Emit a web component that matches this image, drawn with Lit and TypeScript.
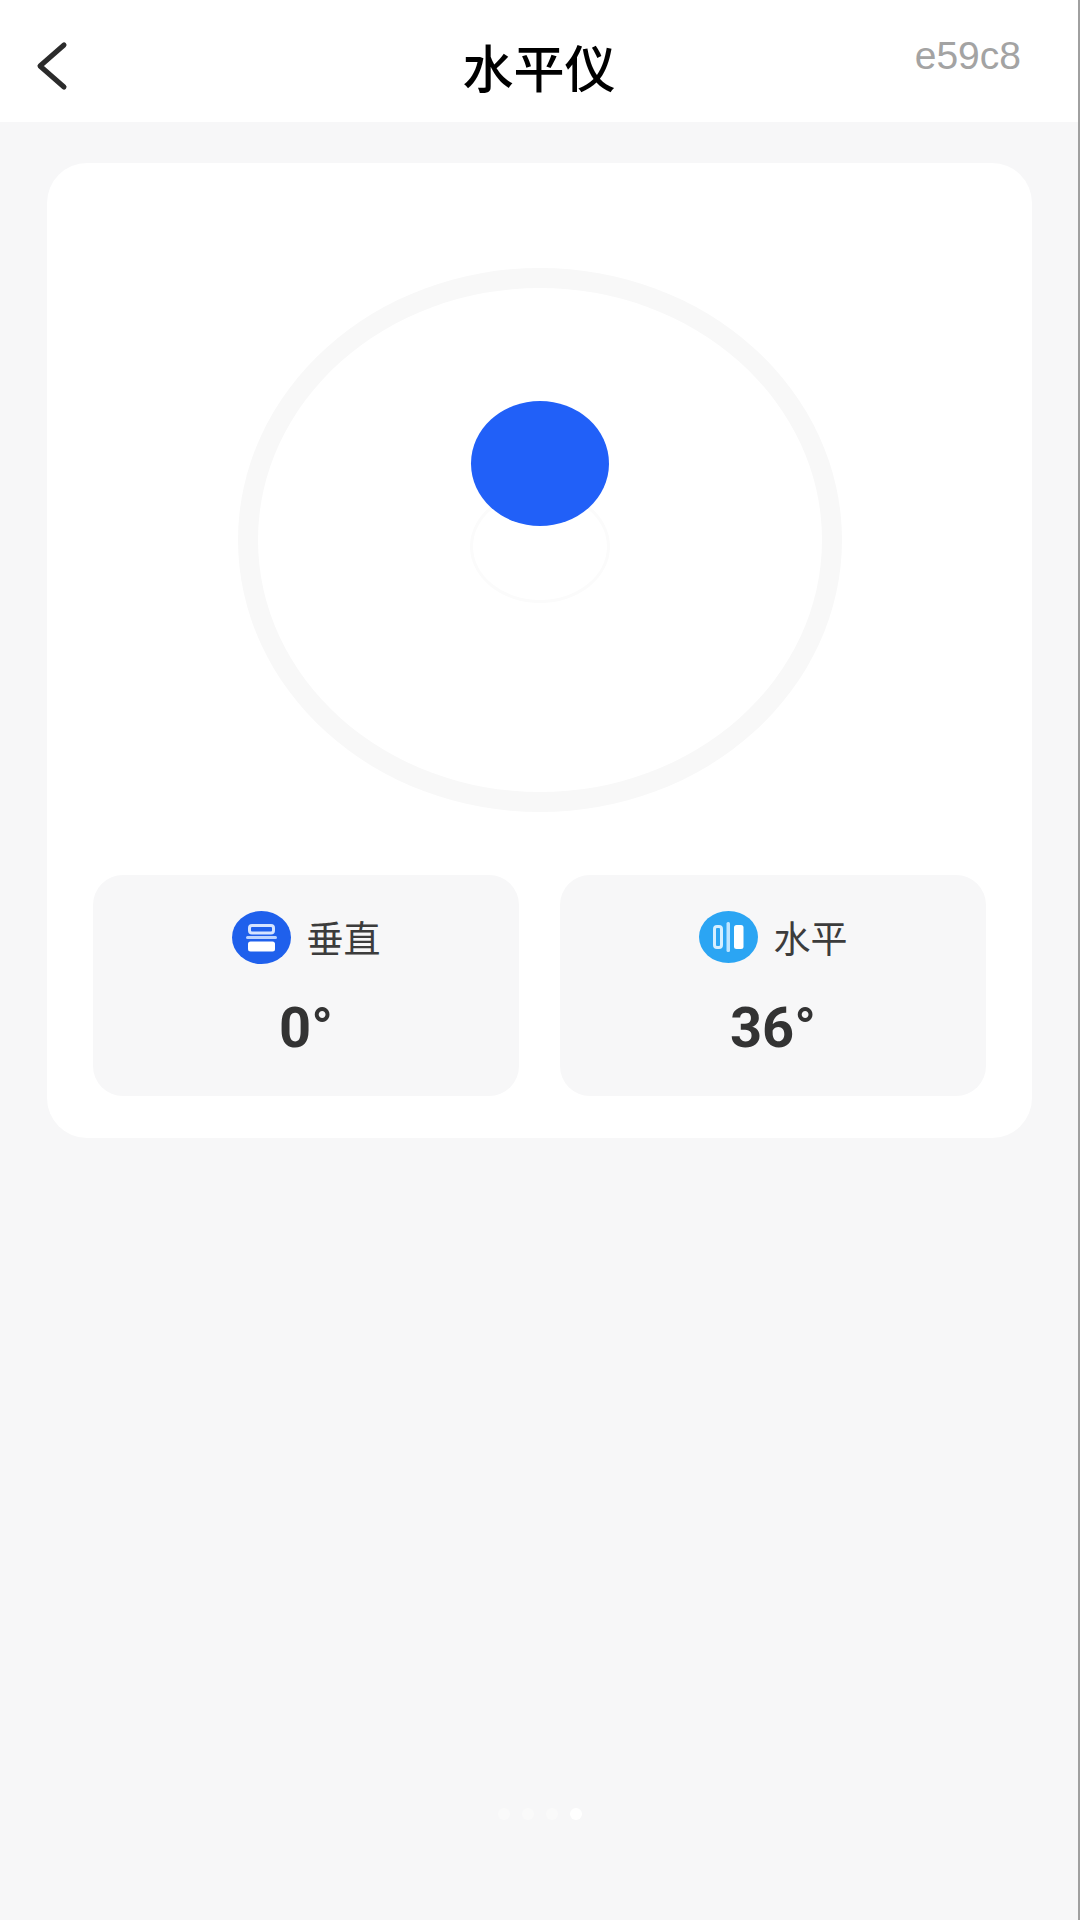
import { LitElement, html, css, svg } from 'lit';
import { customElement, state } from 'lit/decorators.js';

interface Axis {
  label: string;
  value: number;
  icon: 'vertical' | 'horizontal';
}

const verticalIcon = svg`
  <ellipse cx="29.5" cy="26.5" rx="29.5" ry="26.5" fill="#1f60ec" />
  <rect x="17.5" y="14.5" width="24" height="7.5" rx="2.5" fill="none" stroke="#d5e4ff" stroke-width="3" />
  <rect x="14" y="25" width="31" height="3" rx="1.5" fill="#bcd4ff" />
  <rect x="16" y="30.5" width="27" height="10" rx="2.5" fill="#fff" />
`;

const horizontalIcon = svg`
  <ellipse cx="29.5" cy="26" rx="29.5" ry="26" fill="#2ba5f3" />
  <rect x="15.5" y="15.5" width="7" height="21" rx="2.5" fill="none" stroke="#d6efff" stroke-width="3" />
  <rect x="27.5" y="11" width="3.5" height="30" rx="1.5" fill="#bfe5ff" />
  <rect x="35" y="14" width="9.5" height="24" rx="2.5" fill="#fff" />
`;

@customElement('app-root')
export class AppRoot extends LitElement {
  @state() private axes: Axis[] = [
    { label: '垂直', value: 0, icon: 'vertical' },
    { label: '水平', value: 36, icon: 'horizontal' },
  ];

  static styles = css`
    :host {
      display: flex;
      flex-direction: column;
      height: 1920px;
      box-sizing: border-box;
      background: #f7f7f8;
      border-right: 2px solid #a0a0a0;
      font-family: 'Liberation Sans', 'Noto Sans CJK SC', sans-serif;
    }
    .header {
      display: grid;
      grid-template-columns: 1fr auto 1fr;
      align-items: center;
      height: 122px;
      background: #fff;
    }
    .back {
      display: block;
      margin: 8px 0 0 34px;
    }
    .title {
      font-family: 'Noto Sans CJK SC', sans-serif;
      font-size: 51px;
      font-weight: 500;
      line-height: 60px;
      color: #000;
      padding-top: 10px;
    }
    .device {
      justify-self: end;
      margin-right: 57px;
      margin-bottom: 10px;
      font-size: 39px;
      color: #a3a3a3;
    }
    .card {
      margin: 41px 46px 0 47px;
      padding: 105px 46px 42px;
      background: #fff;
      border-radius: 40px;
    }
    .ring {
      position: relative;
      box-sizing: border-box;
      width: 604px;
      height: 544px;
      margin: 0 auto;
      border: 20px solid #f8f8f8;
      border-radius: 50%;
    }
    .target,
    .bubble {
      position: absolute;
      left: 50%;
      border-radius: 50%;
      transform: translateX(-50%);
      box-sizing: border-box;
    }
    .target {
      top: 202px;
      width: 140px;
      height: 113px;
      border: 3px solid #fbfbfb;
    }
    .bubble {
      top: 113px;
      width: 138px;
      height: 125px;
      background: #2160f8;
    }
    .stats {
      display: grid;
      grid-template-columns: 1fr 1fr;
      gap: 41px;
      margin-top: 63px;
    }
    .stat {
      display: flex;
      flex-direction: column;
      align-items: center;
      height: 221px;
      box-sizing: border-box;
      padding-top: 36px;
      background: #f7f7f8;
      border-radius: 30px;
    }
    .stat-head {
      display: flex;
      align-items: center;
      gap: 16px;
    }
    .stat-head svg {
      display: block;
    }
    .label {
      font-family: 'Noto Sans CJK SC', sans-serif;
      font-size: 37px;
      line-height: 53px;
      color: #3c3c3c;
    }
    .value {
      margin-top: 33px;
      font-family: Roboto, 'Liberation Sans', sans-serif;
      font-size: 56px;
      font-weight: 700;
      line-height: 62px;
      color: #333;
    }
    .pager {
      display: flex;
      justify-content: center;
      gap: 12px;
      margin-top: auto;
      padding-bottom: 100px;
      padding-left: 2px;
    }
    .pager span {
      width: 12px;
      height: 12px;
      border-radius: 50%;
      background: #fafafa;
    }
    .pager span.on {
      background: #fff;
    }
  `;

  private renderStat(axis: Axis) {
    const isVertical = axis.icon === 'vertical';
    return html`
      <div class="stat">
        <div class="stat-head">
          <svg width="59" height="53" viewBox="0 0 59 53">
            ${isVertical ? verticalIcon : horizontalIcon}
          </svg>
          <span class="label">${axis.label}</span>
        </div>
        <div class="value">${axis.value}°</div>
      </div>
    `;
  }

  render() {
    return html`
      <div class="header">
        <svg class="back" width="36" height="52" viewBox="0 0 36 52">
          <path
            d="M30 6 L6 27 L30 48"
            fill="none"
            stroke="#2b2b2b"
            stroke-width="5"
            stroke-linecap="round"
            stroke-linejoin="round"
          />
        </svg>
        <div class="title">水平仪</div>
        <div class="device">e59c8</div>
      </div>
      <div class="card">
        <div class="ring">
          <div class="target"></div>
          <div class="bubble"></div>
        </div>
        <div class="stats">${this.axes.map(a => this.renderStat(a))}</div>
      </div>
      <div class="pager">
        <span></span><span></span><span></span><span class="on"></span>
      </div>
    `;
  }
}
